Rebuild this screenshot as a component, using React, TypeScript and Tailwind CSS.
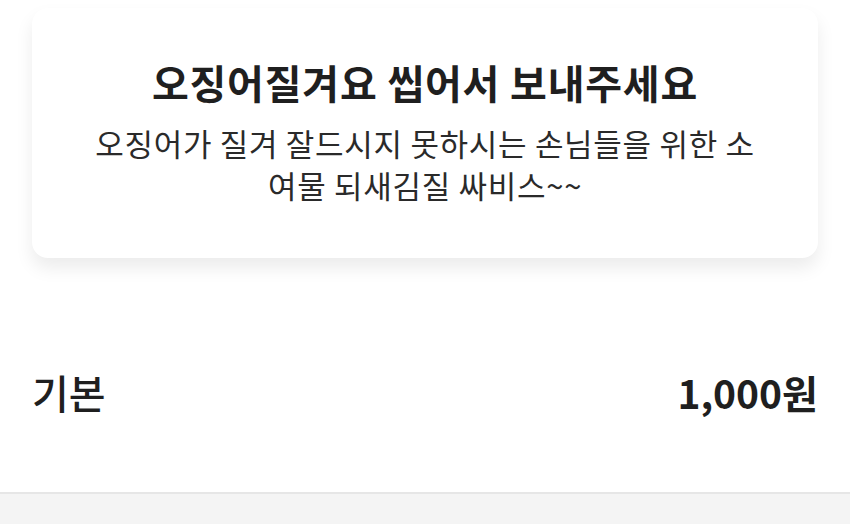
export default function App() {
  const font = { fontFamily: '"Noto Sans CJK KR", "Noto Sans", sans-serif' };
  return (
    <div className="w-[850px] h-[524px] bg-white overflow-hidden flex flex-col text-[#1f1f1f]" style={font}>
      {/* 상품 설명 카드 */}
      <div className="px-8 pt-2">
        <div className="bg-white rounded-2xl shadow-[0_10px_18px_rgba(0,0,0,0.08)] h-[250px] flex flex-col items-center pt-[46px]">
          <h1 className="text-[40px] font-bold leading-[56px] tracking-[0.8px]">오징어질겨요 씹어서 보내주세요</h1>
          <p className="mt-[12px] text-[31px] leading-[42px] tracking-[0.7px] text-center text-[#2a2a2a]">
            오징어가 질겨 잘드시지 못하시는 손님들을 위한 소
            <br />
            여물 되새김질 싸비스~~
          </p>
        </div>
      </div>

      {/* 옵션 */}
      <div className="flex justify-between items-center px-8 mt-[104px] h-[60px]">
        <span className="text-[40px] font-medium">기본</span>
        <span className="text-[39px] font-bold">1,000원</span>
      </div>

      <div className="flex-1" />
      <div className="h-[32px] bg-[#f4f4f4] border-t-2 border-[#e6e6e6]" />
    </div>
  );
}
